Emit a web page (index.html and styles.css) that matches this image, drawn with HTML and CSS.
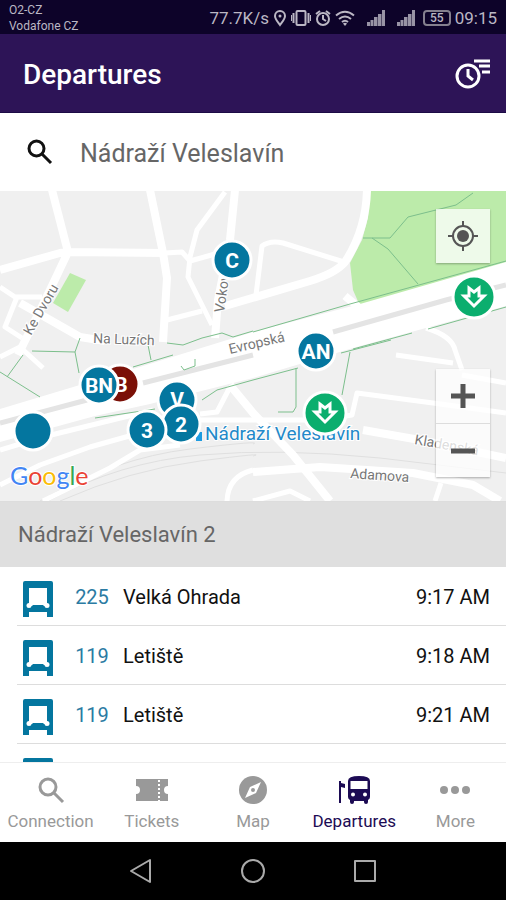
FILE: index.html
```html
<!DOCTYPE html>
<html lang="cs">
<head>
<meta charset="utf-8">
<meta name="viewport" content="width=device-width, initial-scale=1">
<title>Departures</title>
<link rel="stylesheet" href="styles.css">
</head>
<body>
<div class="status">
  <div class="carriers"><span>O2-CZ</span><span>Vodafone CZ</span></div>
  <div class="indicators">
    <span>77.7K/s</span>
    <svg width="14" height="18" viewBox="0 0 14 18" fill="none" stroke="currentColor" stroke-width="2"><path d="M7 16C4 12 2 10 2 7a5 5 0 0 1 10 0c0 3-2 5-5 9z"/><circle cx="7" cy="7" r="1.500" fill="currentColor" stroke="none"/></svg>
    <svg width="20" height="18" viewBox="0 0 20 18" fill="none" stroke="currentColor" stroke-width="2"><rect x="5.500" y="2" width="9" height="14" rx="1"/><path d="M2.500 4v10M17.500 4v10"/><path d="M.5 6v6M19.500 6v6" stroke-width="1"/></svg>
    <svg width="16" height="18" viewBox="0 0 16 18" fill="none" stroke="currentColor" stroke-width="2"><circle cx="8" cy="10" r="6"/><path d="M8 6v4l3 2"/><path d="M1 5l4-3M15 5l-4-3"/></svg>
    <svg width="20" height="18" viewBox="0 0 20 18" fill="none" stroke="currentColor" stroke-width="2"><path d="M1 6.500Q10-1 19 6.500M4 10q6-5 12 0M7 13q3-2.500 6 0"/><path d="M10 17l-2-2.500q2-1.500 4 0z" fill="currentColor" stroke="none"/></svg>
    <svg class="signal" width="18" height="18" viewBox="0 0 18 18" fill="currentColor"><path d="M0 13h3v4H0zM3.500 11h3v6h-3zM7 8h3.500v9H7zM11 5h3.500v12H11zM15 1h3v16h-3z"/></svg>
    <svg class="signal" width="18" height="18" viewBox="0 0 18 18" fill="currentColor"><path d="M0 13h3v4H0zM3.500 11h3v6h-3zM7 8h3.500v9H7zM11 5h3.500v12H11zM15 1h3v16h-3z"/></svg>
    <span class="battery">55</span>
    <span>09:15</span>
  </div>
</div>

<header class="bar">
  <h1>Departures</h1>
  <button type="button" aria-label="Departure time">
    <svg width="36" height="32" viewBox="0 0 36 32" fill="none" stroke="#fff" stroke-width="3"><circle cx="13" cy="18" r="11"/><path d="M13 11v7l5 4M19 3h16M24 8h11M27 14h8"/></svg>
  </button>
</header>

<label class="search">
  <svg width="26" height="26" viewBox="0 0 26 26" fill="none" stroke="#111" stroke-width="3"><circle cx="9.500" cy="9.500" r="7.500"/><path d="M15 15l9 9"/></svg>
  <input type="text" aria-label="Stop" value="Nádraží Veleslavín">
</label>

<main>
<section class="map" aria-label="Map">
  <svg class="canvas" viewBox="0 191 506 310" preserveAspectRatio="xMidYMid slice">
    <rect y="190" width="506" height="312" fill="#f0f0f0"/>
    <path d="M370 190H506V263L360 306 353 290 350 263 362 240 368 218z" fill="#bcebaa"/>
    <path d="M70 273l16 7-18 32-15-9z" fill="#bcebaa"/>
    <g class="rails">
      <path d="M48 501Q120 462 200 455T380 458L506 473"/>
      <path d="M60 501Q130 470 200 461T253 456"/>
      <path d="M40 501Q115 458 190 449T253 444"/>
    </g>
    <g class="roads">
      <g class="wide">
        <path d="M52 190L68 252 50 290 18 355M0 270L60 253 68 252 165 253M150 190L163 253 167 278 163 342M235 190L230 240 218 300 215 338M367 190Q366 230 345 262 336 273 310 281L225 306M20 303L52 321 80 337 105 341"/>
        <path d="M230 385L253 413 293 455 330 501M363 430L420 440 506 458M253 472L320 467 413 473 473 485 500 501M345 296L362 310"/>
      </g>
      <path d="M225 192L197 230 190 257 188 277 212 325M165 253L182 252 190 261 215 254M167 320L202 311M256 295L262 246Q270 240 283 243L344 262M0 287L15 297 42 297M17 297L5 327 22 338M0 357L20 347 43 368"/>
      <path d="M0 450L43 437 153 410M0 485L40 465 90 447 140 433M43 501L110 468 140 450 180 445M230 387L217 412 200 414M506 413L433 403 357 393 352 415 320 420 200 420M396 355L453 363M426 328Q452 336 455 350L462 370M227 501Q228 476 253 470M441 483L435 501M253 501L290 491 310 501M462 375L506 383"/>
    </g>
    <path d="M0 409L143 366 253 332 360 304 506 262V306L353 348 253 378 150 404 95 416 0 442z" fill="#fff"/>
    <g class="tram">
      <path d="M0 423L87 400M143 383L253 355M333 332L446 300 506 285"/>
    </g>
    <g class="paths">
      <path d="M363 238H390L408 217 456 205 473 193M372 238L388 249 418 284M253 332L350 304 506 261M353 349L412 333M428 329L506 307"/>
      <path d="M32 351L75 352 80 338M75 352L79 373M23 355L7 377M0 372L40 397M151 360L148 345M133 367L173 355M167 343L183 345 202 338 222 333 233 337 253 331M181 366L184 370 195 366V359M95 418L155 409M202 400L217 390 253 380 298 368M296 368V407L293 412H278M341 353L391 340M350 352L342 395"/>
    </g>
    <g class="streets">
      <text transform="translate(31 336) rotate(-60)">Ke Dvoru</text>
      <text transform="translate(93 343) rotate(2)">Na Luzích</text>
      <text transform="translate(230 354) rotate(-13)">Evropská</text>
      <text transform="translate(224 313) rotate(-82)">Vokovická</text>
      <text transform="translate(414 444) rotate(10)">Kladenská</text>
      <text transform="translate(350 478) rotate(4)">Adamova</text>
    </g>
    <path d="M196 432h6v9h-6z" fill="#1e9be0"/>
    <text class="station" x="205" y="440">Nádraží Veleslavín</text>
    <g class="pins">
      <circle cx="232" cy="260" r="19"/><text x="232" y="268">C</text>
      <circle cx="316" cy="351" r="19"/><text x="316" y="359">AN</text>
      <circle class="red" cx="120" cy="384" r="19"/><text x="121" y="392">B</text>
      <circle cx="99" cy="385" r="19"/><text x="99" y="393">BN</text>
      <circle cx="177" cy="400" r="19"/><text x="177" y="407">V</text>
      <circle cx="181" cy="424" r="19"/><text x="181" y="432">2</text>
      <circle cx="147" cy="430" r="19"/><text x="147" y="438">3</text>
      <circle cx="33" cy="431" r="19"/>
      <circle class="metro" cx="474" cy="297" r="21"/><circle class="metro" cx="325" cy="413" r="21"/>
      <path class="arrow" d="M469 296v-8l5 4 5-4v8h5l-10 10-10-10z"/>
      <path class="arrow" d="M320 412v-8l5 4 5-4v8h5l-10 10-10-10z"/>
    </g>
    <text class="google" x="10" y="485"><tspan fill="#4285f4">G</tspan><tspan fill="#ea4335">o</tspan><tspan fill="#fbbc05">o</tspan><tspan fill="#4285f4">g</tspan><tspan fill="#34a853">l</tspan><tspan fill="#ea4335">e</tspan></text>
  </svg>
  <div class="controls">
    <button class="control" type="button" aria-label="My location">
      <svg width="30" height="30" viewBox="0 0 30 30" fill="none" stroke="#555" stroke-width="2"><circle cx="15" cy="15" r="10"/><circle cx="15" cy="15" r="6" fill="#555" stroke="none"/><path d="M15 0v6M15 24v6M0 15h6M24 15h6"/></svg>
    </button>
    <div class="zoom">
      <button class="control" type="button" aria-label="Zoom in"><svg width="24" height="24" viewBox="0 0 24 24" stroke="#555" stroke-width="5"><path d="M12 0v24M0 12h24"/></svg></button>
      <button class="control" type="button" aria-label="Zoom out"><svg width="24" height="24" viewBox="0 0 24 24" stroke="#555" stroke-width="5"><path d="M0 12h24"/></svg></button>
    </div>
  </div>
</section>

<h2 class="stop">Nádraží Veleslavín 2</h2>
<svg width="0" height="0" class="defs" aria-hidden="true">
  <symbol id="bus" viewBox="0 0 30 36">
    <path d="M2 0h26q2 0 2 2v34h-6v-5H6v5H0V2q0-2 2-2z"/>
    <path fill="#fff" d="M6 7h18v18h-3l-1-1H10l-1 1H6z"/>
    <circle fill="#fff" cx="6" cy="24.500" r="2.500"/><circle fill="#fff" cx="24" cy="24.500" r="2.500"/>
  </symbol>
</svg>
<ul class="list">
  <li><svg class="bus"><use href="#bus"/></svg><span class="line">225</span><span class="name">Velká Ohrada</span><time>9:17 AM</time></li>
  <li><svg class="bus"><use href="#bus"/></svg><span class="line">119</span><span class="name">Letiště</span><time>9:18 AM</time></li>
  <li><svg class="bus"><use href="#bus"/></svg><span class="line">119</span><span class="name">Letiště</span><time>9:21 AM</time></li>
  <li><svg class="bus"><use href="#bus"/></svg></li>
</ul>
</main>

<nav class="tabs">
  <a href="#connection"><svg width="28" height="28" viewBox="0 0 28 28" fill="none" stroke="currentColor" stroke-width="3"><circle cx="11" cy="11" r="8"/><path d="M17 17l9 9"/></svg>Connection</a>
  <a href="#tickets"><svg width="32" height="28" viewBox="0 0 32 28"><path fill="currentColor" d="M0 3h32v7a4 4 0 0 0 0 8v7H0v-7a4 4 0 0 0 0-8z"/><path d="M23 4v21" stroke="#fff" stroke-width="2" stroke-dasharray="2 2"/></svg>Tickets</a>
  <a href="#map"><svg width="28" height="28" viewBox="0 0 28 28"><circle cx="14" cy="14" r="14" fill="currentColor"/><path fill-rule="evenodd" fill="#fff" d="M22 6l-5 11-11 5 5-11zM14 12a2 2 0 1 0 0 4 2 2 0 0 0 0-4z"/></svg>Map</a>
  <a href="#departures" class="active" aria-current="page"><svg width="32" height="28" viewBox="0 0 32 28"><path fill="currentColor" d="M1 5h2v2l4 1v4l-4-1v16H1z"/><path fill="currentColor" fill-rule="evenodd" d="M10 5q0-5 11-5t11 5v16q0 2-2 3v2q0 2-2 2t-2-2v-1H16v1q0 2-2 2t-2-2v-2q-2-1-2-3zM12.500 5v8h17V5zM15 16.500a2 2 0 1 0 0 4 2 2 0 0 0 0-4zM27 16.500a2 2 0 1 0 0 4 2 2 0 0 0 0-4z"/></svg>Departures</a>
  <a href="#more"><svg width="32" height="28" viewBox="0 0 32 28" fill="currentColor"><circle cx="5" cy="14" r="4"/><circle cx="16" cy="14" r="4"/><circle cx="27" cy="14" r="4"/></svg>More</a>
</nav>

<div class="system">
  <button type="button" aria-label="Back"><svg width="26" height="26" viewBox="0 0 26 26"><path d="M22 2v22L3 13z"/></svg></button>
  <button type="button" aria-label="Home"><svg width="26" height="26" viewBox="0 0 26 26"><circle cx="13" cy="13" r="11"/></svg></button>
  <button type="button" aria-label="Recent"><svg width="26" height="26" viewBox="0 0 26 26"><path d="M3 3h20v20H3z"/></svg></button>
</div>
</body>
</html>
```
FILE: styles.css
```css
* { box-sizing: border-box; }
body {
  margin: 0;
  height: 100vh;
  display: flex;
  flex-direction: column;
  background: #fff;
  color: #111;
  font-family: Roboto, "Liberation Sans", sans-serif;
  font-size: 20px;
}
button { border: 0; padding: 0; background: none; cursor: pointer; }
svg { display: block; flex: none; }
.defs { position: absolute; }

.status {
  flex: none;
  height: 34px;
  padding: 2px 9px 0;
  display: flex;
  align-items: center;
  justify-content: space-between;
  background: #0d0329;
  color: #bbb7c4;
}
.carriers { display: flex; flex-direction: column; font-size: 12px; line-height: 16px; }
.indicators { display: flex; align-items: center; gap: 4px; font-size: 17px; }
.signal { margin-left: 8px; opacity: .8; }
.battery {
  border: 2px solid #85808f;
  border-radius: 4px;
  padding: 0 5px;
  margin-left: 4px;
  font-size: 12px;
  line-height: 12px;
  font-weight: 500;
}

.bar {
  flex: none;
  height: 79px;
  padding: 2px 15px 0 23px;
  display: flex;
  align-items: center;
  justify-content: space-between;
  background: #2d1457;
  border-bottom: 1px solid #1c0b46;
  color: #fff;
}
h1 { margin: 0; font-size: 28px; font-weight: 500; }

.search {
  flex: none;
  height: 78px;
  padding: 0 27px;
  display: flex;
  align-items: center;
  gap: 27px;
}
.search input {
  flex: 1;
  min-width: 0;
  border: 0;
  padding: 2px 0 0;
  outline: 0;
  background: none;
  font: 25px Roboto, sans-serif;
  color: #666;
}

main { flex: 1; min-height: 0; overflow: hidden; }
.map { position: relative; height: 311px; border-bottom: 1px solid #ddd; overflow: hidden; }
.canvas { width: 100%; height: 100%; }
.roads { fill: none; stroke: #fff; stroke-width: 5; stroke-linejoin: round; }
.wide { stroke-width: 8; }
.rails { fill: none; stroke: #e0e0e0; stroke-width: 1; }
.tram { fill: none; stroke: #e4e4e4; stroke-width: 5; }
.paths { fill: none; stroke: #7cbf8c; stroke-width: 1; }
.streets { font-size: 14px; fill: #777; stroke: #fff; stroke-width: 2; paint-order: stroke; }
.station { font-size: 19px; fill: #2389c9; stroke: #fff; stroke-width: 2; paint-order: stroke; }
.pins circle { fill: #04769f; stroke: #fff; stroke-width: 3; }
.pins .red { fill: #7b1007; }
.pins .metro { fill: #0bae6e; }
.pins text { font: 700 21px Roboto, sans-serif; fill: #fff; text-anchor: middle; }
.pins .arrow { fill: none; stroke: #fff; stroke-width: 3; }
.google { font: 25px Lato, sans-serif; stroke: #fff; stroke-width: 2; paint-order: stroke; }

.controls {
  position: absolute;
  inset: 18px 16px 24px auto;
  display: flex;
  flex-direction: column;
  justify-content: space-between;
}
.control {
  display: grid;
  place-items: center;
  width: 54px;
  height: 54px;
  background: rgba(255, 255, 255, .75);
  box-shadow: 0 1px 2px rgba(0, 0, 0, .3);
}
.zoom { box-shadow: 0 1px 2px rgba(0, 0, 0, .3); }
.zoom .control { box-shadow: none; }
.zoom .control + .control { border-top: 1px solid #ddd; }

.stop {
  margin: 0;
  padding: 1px 18px 0;
  background: #dfdfdf;
  color: #666;
  font-size: 22px;
  font-weight: 400;
  line-height: 64px;
}
.list { margin: 0; padding: 0 0 0 17px; list-style: none; }
.list li {
  display: flex;
  align-items: center;
  height: 59px;
  padding: 5px 16px 0 6px;
  border-bottom: 1px solid #ddd;
}
.bus { width: 30px; height: 36px; fill: #04769f; }
.line { width: 40px; margin: 0 11px 0 19px; text-align: center; color: #2b7ba3; }
.line, .name, .list time { line-height: 24px; padding-bottom: 4px; }
.name { flex: 1; }

.tabs {
  flex: none;
  height: 80px;
  padding-top: 2px;
  display: grid;
  grid-template-columns: repeat(5, 1fr);
  align-items: center;
  border-top: 1px solid #eee;
  background: #fff;
}
.tabs a {
  display: flex;
  flex-direction: column;
  align-items: center;
  gap: 6px;
  color: #999;
  font-size: 17px;
  line-height: 22px;
  text-decoration: none;
}
.tabs .active { color: #1c0b54; }

.system {
  flex: none;
  height: 58px;
  display: flex;
  align-items: center;
  justify-content: center;
  gap: 86px;
  background: #000;
}
.system svg { fill: none; stroke: #aaa; stroke-width: 2; stroke-linejoin: round; }
```
